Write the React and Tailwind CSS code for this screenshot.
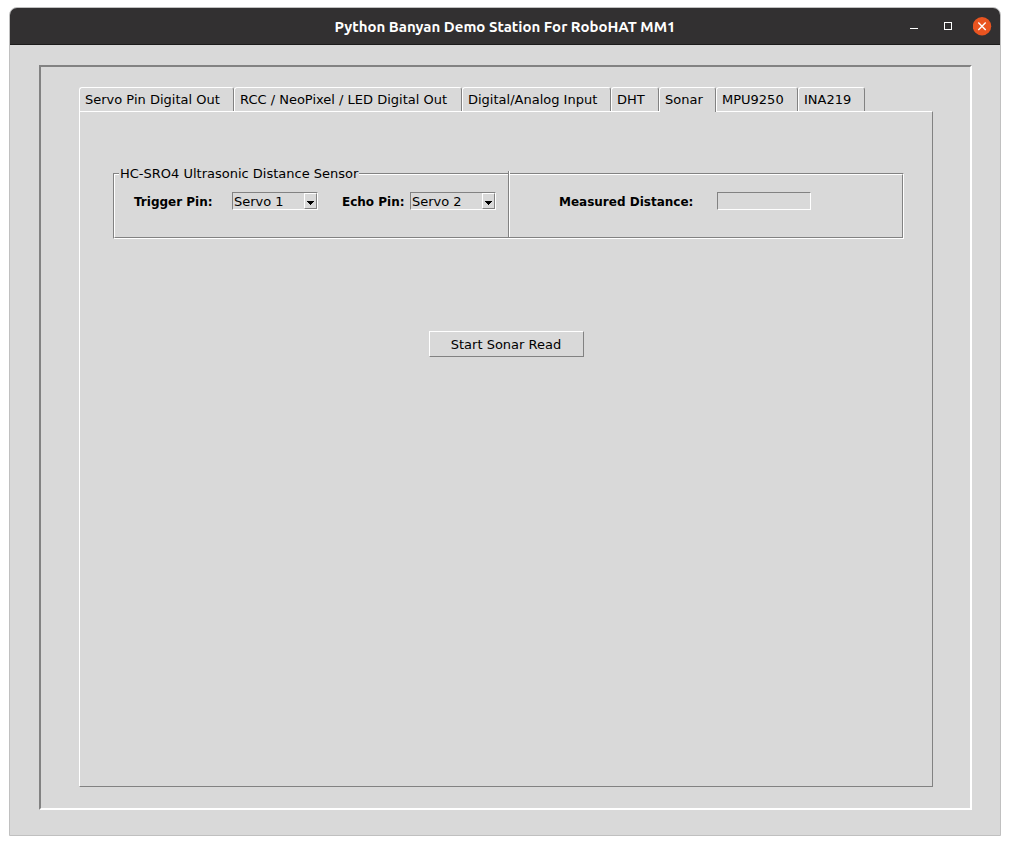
import { useState } from "react";

const TABS = [
  { name: "Servo Pin Digital Out", width: "w-[155px]" },
  { name: "RCC / NeoPixel / LED Digital Out", width: "w-[228px]" },
  { name: "Digital/Analog Input", width: "w-[149px]" },
  { name: "DHT", width: "w-[48px]" },
  { name: "Sonar", width: "w-[57px]" },
  { name: "MPU9250", width: "w-[82px]" },
  { name: "INA219", width: "w-[67px]" },
];

const PINS = ["Servo 1", "Servo 2", "Servo 3", "Servo 4", "Servo 5", "Servo 6"];

const SUNKEN =
  "border border-t-[#828282] border-l-[#828282] border-r-white border-b-white";
const RAISED =
  "border border-t-white border-l-white border-r-[#828282] border-b-[#828282]";

function TitleBar() {
  return (
    <header className="grid h-[37px] grid-cols-[1fr_auto_1fr] items-center rounded-t-[7px] border-b border-[#1c1b1b] bg-[#323031] text-white">
      <h1 className="col-start-2 pt-px font-['Ubuntu','Noto_Sans',sans-serif] text-[15px] font-bold leading-5">
        Python Banyan Demo Station For RoboHAT MM1
      </h1>
      <div className="flex items-center justify-end gap-4 pr-2">
        <button type="button" aria-label="Minimize" className="size-[18px]">
          <svg viewBox="0 0 18 18" className="size-full" shapeRendering="crispEdges">
            <path d="M5 11.5h8" stroke="#fff" />
          </svg>
        </button>
        <button type="button" aria-label="Maximize" className="size-[18px]">
          <svg viewBox="0 0 18 18" className="size-full" shapeRendering="crispEdges">
            <path d="M5.5 5.5h7v7h-7z" stroke="#fff" fill="none" />
          </svg>
        </button>
        <button type="button" aria-label="Close" className="size-[19px]">
          <svg viewBox="0 0 19 19" className="size-full">
            <circle cx="9" cy="9.3" r="9.2" fill="#e95420" />
            <path d="M5.3 5.6l7.4 7.4M12.7 5.6l-7.4 7.4" stroke="#fff" strokeWidth="1.4" />
          </svg>
        </button>
      </div>
    </header>
  );
}

function TabStrip({ active, onSelect }) {
  return (
    <div role="tablist" className="flex">
      {TABS.map((tab) => (
        <button
          key={tab.name}
          type="button"
          role="tab"
          aria-selected={tab.name === active}
          onClick={() => onSelect(tab.name)}
          className={`${tab.width} h-6 rounded-t-[3px] border border-b-0 border-t-white border-l-white border-r-[#828282] pl-[5px] text-left whitespace-nowrap bg-[#d9d9d9] aria-selected:z-10 aria-selected:-mb-px aria-selected:h-[25px] aria-selected:pb-px`}
        >
          {tab.name}
        </button>
      ))}
    </div>
  );
}

function PinSelect({ id, value, onChange }) {
  return (
    <div className="relative h-[18px] w-[86px]">
      <select
        id={id}
        value={value}
        onChange={(e) => onChange(e.target.value)}
        className={`block size-full appearance-none bg-[#d9d9d9] pt-px pl-px leading-4 ${SUNKEN}`}
      >
        {PINS.map((pin) => (
          <option key={pin}>{pin}</option>
        ))}
      </select>
      <span
        aria-hidden="true"
        className={`pointer-events-none absolute top-px right-px flex h-4 w-[13px] items-end justify-center bg-[#d9d9d9] pb-[3px] ${RAISED}`}
      >
        <svg viewBox="0 0 7 4" className="h-1 w-[7px]" shapeRendering="crispEdges">
          <path d="M0 0h7v1H0zM1 1h5v1H1zM2 2h3v1H2zM3 3h1v1H3z" fill="#000" />
        </svg>
      </span>
    </div>
  );
}

function SonarPanel() {
  const [trigger, setTrigger] = useState("Servo 1");
  const [echo, setEcho] = useState("Servo 2");
  return (
    <div className="flex flex-col pt-[61px]">
      <fieldset className={`relative mr-7 ml-[33px] ${SUNKEN}`}>
        <legend className="absolute -top-[10px] left-[5px] z-10 bg-[#d9d9d9] px-px leading-5">
          HC-SRO4 Ultrasonic Distance Sensor
        </legend>
        <div className={`flex h-16 ${RAISED}`}>
          <div className="-mt-1 flex w-[394px] items-start border-r border-r-[#828282] pt-[21px] pl-[19px] text-[12px] font-bold">
            <label htmlFor="trigger" className="w-[98px] leading-5">
              Trigger Pin:
            </label>
            <div className="text-[13px] font-normal">
              <PinSelect id="trigger" value={trigger} onChange={setTrigger} />
            </div>
            <label htmlFor="echo" className="ml-6 w-[68px] leading-5">
              Echo Pin:
            </label>
            <div className="text-[13px] font-normal">
              <PinSelect id="echo" value={echo} onChange={setEcho} />
            </div>
          </div>
          <div className="-mt-1 flex flex-1 items-start border-l border-l-white pt-[21px] pl-[49px] text-[12px] font-bold">
            <label htmlFor="distance" className="w-[158px] leading-5">
              Measured Distance:
            </label>
            <input
              id="distance"
              type="text"
              readOnly
              className={`h-[18px] w-[94px] bg-[#d9d9d9] px-px text-[13px] font-normal ${SUNKEN}`}
            />
          </div>
        </div>
      </fieldset>
      <button
        type="button"
        className={`mt-[92px] h-[26px] w-[155px] self-center bg-[#d9d9d9] pt-px ${RAISED}`}
      >
        Start Sonar Read
      </button>
    </div>
  );
}

export default function App() {
  const [active, setActive] = useState("Sonar");
  return (
    <div className="flex min-h-screen bg-white px-[9px] pt-[7px] pb-[9px] font-['DejaVu_Sans',sans-serif] text-[13px] text-black">
      <div className="flex flex-1 flex-col rounded-t-lg border border-[#c0c0c0] bg-[#d9d9d9]">
        <TitleBar />
        <main className="mt-5 mr-7 mb-[25px] ml-[29px] flex flex-1 flex-col border-2 border-t-[#828282] border-r-white border-b-white border-l-[#828282] pt-5 pr-[37px] pb-[21px] pl-[38px]">
          <TabStrip active={active} onSelect={setActive} />
          <section role="tabpanel" aria-label={active} className={`flex-1 ${RAISED}`}>
            {active === "Sonar" && <SonarPanel />}
          </section>
        </main>
      </div>
    </div>
  );
}
